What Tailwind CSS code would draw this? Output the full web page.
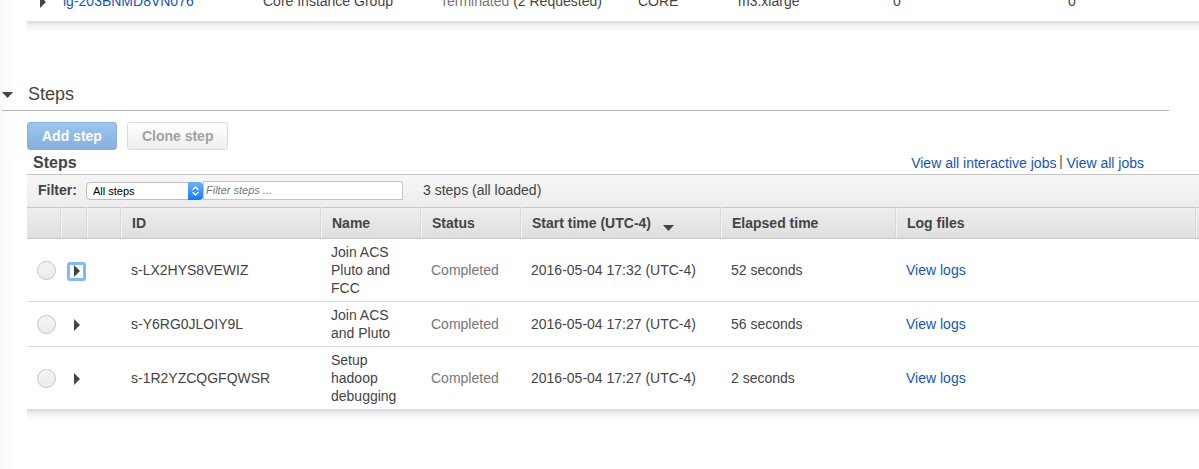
<!DOCTYPE html>
<html lang="en">
<head>
<meta charset="utf-8">
<title>Cluster steps</title>
<script src="https://cdn.jsdelivr.net/npm/@tailwindcss/browser@4"></script>
</head>
<body class="min-h-screen bg-linear-to-r from-[#fafafa] to-white to-[14px] font-['Liberation_Sans',Arial,sans-serif] text-sm leading-[18px] text-[#444]">

<section class="pl-[27px]" aria-label="Instance groups">
  <div class="flex h-[21px] flex-col justify-end overflow-hidden">
    <table class="w-full table-fixed border-collapse">
      <colgroup><col class="w-[36px]"><col class="w-[200px]"><col class="w-[177px]"><col class="w-[198px]"><col class="w-[100px]"><col class="w-[155px]"><col class="w-[175px]"><col></colgroup>
      <tbody>
        <tr class="align-top whitespace-nowrap">
          <td class="p-0 pb-[13px] pl-[13px]"><button type="button" aria-label="Expand instance group" class="block pt-1"><svg class="block h-[12px] w-[6px] fill-[#444]" viewBox="0 0 6 12"><path d="M0 0L6 6L0 12Z"/></svg></button></td>
          <td class="p-0"><a href="#" class="text-[#1456b4]">ig-203BNMD8VN076</a></td>
          <td class="p-0">Core Instance Group</td>
          <td class="p-0"><span class="text-[#777]">Terminated</span> (2 Requested)</td>
          <td class="p-0">CORE</td>
          <td class="p-0">m3.xlarge</td>
          <td class="p-0">0</td>
          <td class="p-0">0</td>
        </tr>
      </tbody>
    </table>
  </div>
  <div class="h-[12px] bg-linear-to-b from-[#dadada] via-[#f3f3f3] via-40% to-white"></div>
</section>

<section aria-label="Steps">
  <header class="mr-[30px] ml-[2px] flex h-[78px] items-end border-b border-[#b8b8b8] pb-[4px]">
    <button type="button" aria-label="Collapse steps" class="flex h-6 items-center">
      <svg class="mt-[2px] mr-[15px] block h-[6px] w-[11px] fill-[#444]" viewBox="0 0 11 6"><path d="M0 0H11L5.500 6Z"/></svg>
    </button>
    <h2 class="text-lg leading-6">Steps</h2>
  </header>

  <div class="pl-[27px]">
    <div class="flex gap-[10px] pt-[11px]">
      <button type="button" class="h-[28px] rounded-[3px] border border-[#8ab2da] bg-linear-to-b from-[#9cc6ef] to-[#86b0da] px-[14px] font-bold text-white">Add step</button>
      <button type="button" disabled class="h-[28px] rounded-[3px] border border-[#dcdcdc] bg-linear-to-b from-white to-[#eee] px-[14px] font-bold text-[#a2a2a2]">Clone step</button>
    </div>

    <div class="flex h-[24px] items-center justify-between pr-[55px] pl-[6px]">
      <h3 class="pt-[2px] text-base leading-6 font-bold">Steps</h3>
      <nav class="flex items-center gap-1 pt-[2px]" aria-label="Jobs">
        <a href="#" class="text-[#1456b4]">View all interactive jobs</a>
        <span class="mb-[2px] h-[14px] w-[2px] bg-[#cf8a4c]"></span>
        <a href="#" class="text-[#1456b4]">View all jobs</a>
      </nav>
    </div>

    <div class="flex h-[33px] items-center border-t border-[#c5c5c5] bg-linear-to-b from-[#f6f6f6] to-[#ededed] pb-[2px] pl-[11px]">
      <label for="state" class="w-[48px] font-bold">Filter:</label>
      <div class="relative mt-[2px] h-[18px] w-[117px]">
        <select id="state" class="block h-[18px] w-full appearance-none rounded-[4px] border border-[#bdbdbd] bg-white pl-[6px] text-[11px] leading-4 text-black"><option>All steps</option></select>
        <span class="pointer-events-none absolute top-0 right-0 flex h-[18px] w-[15px] items-center justify-center rounded-r-[4px] bg-linear-to-b from-[#6ab3f9] to-[#0a78fb]">
          <svg class="h-[10px] w-[7px] fill-none stroke-white" viewBox="0 0 7 10" stroke-width="1.300" stroke-linecap="round" stroke-linejoin="round"><path d="M1 3.500L3.500 1L6 3.500M1 6.500L3.500 9L6 6.500"/></svg>
        </span>
      </div>
      <input type="text" aria-label="Filter steps" placeholder="Filter steps ..." class="h-[19px] w-[200px] border border-[#c5c5c5] bg-white px-[2px] text-[11px] italic placeholder:text-[#777]">
      <span class="pl-5">3 steps (all loaded)</span>
    </div>

    <table class="w-full table-fixed border-separate border-spacing-0">
      <colgroup><col class="w-[34px]"><col class="w-[26px]"><col class="w-[34px]"><col class="w-[200px]"><col class="w-[100px]"><col class="w-[100px]"><col class="w-[200px]"><col class="w-[175px]"><col><col class="w-[3px]"></colgroup>
      <thead>
        <tr class="h-[32px] bg-linear-to-b from-[#eee] to-[#dedede] text-left *:border-y *:border-t-[#c5c5c5] *:border-b-[#c5c5c5]">
          <td class="border-r border-r-[#d8d8d8] p-0"></td>
          <td class="border-r border-l border-r-[#d8d8d8] border-l-[#f2f2f2] p-0"></td>
          <td class="border-r border-l border-r-[#d8d8d8] border-l-[#f2f2f2] p-0"></td>
          <th scope="col" class="border-r border-l border-r-[#d8d8d8] border-l-[#f2f2f2] p-0 pl-[10px]">ID</th>
          <th scope="col" class="border-r border-l border-r-[#d8d8d8] border-l-[#f2f2f2] p-0 pl-[10px]">Name</th>
          <th scope="col" class="border-r border-l border-r-[#d8d8d8] border-l-[#f2f2f2] p-0 pl-[10px]">Status</th>
          <th scope="col" aria-sort="descending" class="border-r border-l border-r-[#d8d8d8] border-l-[#f2f2f2] p-0 pl-[10px]"><span class="flex items-center">Start time (UTC-4)<svg class="mt-[9px] ml-3 h-[6px] w-[11px] fill-[#444]" viewBox="0 0 11 6"><path d="M0 0H11L5.500 6Z"/></svg></span></th>
          <th scope="col" class="border-r border-l border-r-[#d8d8d8] border-l-[#f2f2f2] p-0 pl-[10px]">Elapsed time</th>
          <th scope="col" class="border-r border-l border-r-[#d8d8d8] border-l-[#f2f2f2] p-0 pl-[10px]">Log files</th>
          <td class="border-l border-l-[#f2f2f2] p-0"></td>
        </tr>
      </thead>
      <tbody class="bg-white">
        <tr class="*:border-b *:border-[#ddd]">
          <td class="p-0 pl-[10px]"><input type="radio" name="step" aria-label="Select s-LX2HYS8VEWIZ" class="block h-[19px] w-[19px] appearance-none rounded-full border border-[#c6c6c6] bg-linear-to-b from-[#f4f4f4] to-[#ebebeb]"></td>
          <td class="p-0 pl-[6px]"><button type="button" aria-label="Expand s-LX2HYS8VEWIZ" class="mt-[2px] flex h-[19px] w-[19px] items-center justify-center rounded-[3px] border-3 border-[#7fb9fb]"><svg class="h-[12px] w-[6px] fill-[#444]" viewBox="0 0 6 12"><path d="M0 0L6 6L0 12Z"/></svg></button></td>
          <td class="p-0"></td>
          <td class="p-0 pl-[10px]">s-LX2HYS8VEWIZ</td>
          <td class="py-1 pr-4 pl-[10px]">Join ACS Pluto and FCC</td>
          <td class="p-0 pl-[10px] text-[#777]">Completed</td>
          <td class="p-0 pl-[10px]">2016-05-04 17:32 (UTC-4)</td>
          <td class="p-0 pl-[10px]">52 seconds</td>
          <td class="p-0 pl-[10px]"><a href="#" class="text-[#1456b4]">View logs</a></td>
          <td class="p-0"></td>
        </tr>
        <tr class="*:border-b *:border-[#ddd]">
          <td class="p-0 pl-[10px]"><input type="radio" name="step" aria-label="Select s-Y6RG0JLOIY9L" class="block h-[19px] w-[19px] appearance-none rounded-full border border-[#c6c6c6] bg-linear-to-b from-[#f4f4f4] to-[#ebebeb]"></td>
          <td class="p-0 pl-[6px]"><button type="button" aria-label="Expand s-Y6RG0JLOIY9L" class="mt-[2px] flex h-[19px] w-[19px] items-center justify-center"><svg class="h-[12px] w-[6px] fill-[#444]" viewBox="0 0 6 12"><path d="M0 0L6 6L0 12Z"/></svg></button></td>
          <td class="p-0"></td>
          <td class="p-0 pl-[10px]">s-Y6RG0JLOIY9L</td>
          <td class="py-1 pr-4 pl-[10px]">Join ACS and Pluto</td>
          <td class="p-0 pl-[10px] text-[#777]">Completed</td>
          <td class="p-0 pl-[10px]">2016-05-04 17:27 (UTC-4)</td>
          <td class="p-0 pl-[10px]">56 seconds</td>
          <td class="p-0 pl-[10px]"><a href="#" class="text-[#1456b4]">View logs</a></td>
          <td class="p-0"></td>
        </tr>
        <tr>
          <td class="p-0 pl-[10px]"><input type="radio" name="step" aria-label="Select s-1R2YZCQGFQWSR" class="block h-[19px] w-[19px] appearance-none rounded-full border border-[#c6c6c6] bg-linear-to-b from-[#f4f4f4] to-[#ebebeb]"></td>
          <td class="p-0 pl-[6px]"><button type="button" aria-label="Expand s-1R2YZCQGFQWSR" class="mt-[2px] flex h-[19px] w-[19px] items-center justify-center"><svg class="h-[12px] w-[6px] fill-[#444]" viewBox="0 0 6 12"><path d="M0 0L6 6L0 12Z"/></svg></button></td>
          <td class="p-0"></td>
          <td class="p-0 pl-[10px]">s-1R2YZCQGFQWSR</td>
          <td class="py-1 pr-4 pl-[10px]">Setup hadoop debugging</td>
          <td class="p-0 pl-[10px] text-[#777]">Completed</td>
          <td class="p-0 pl-[10px]">2016-05-04 17:27 (UTC-4)</td>
          <td class="p-0 pl-[10px]">2 seconds</td>
          <td class="p-0 pl-[10px]"><a href="#" class="text-[#1456b4]">View logs</a></td>
          <td class="p-0"></td>
        </tr>
      </tbody>
    </table>
    <div class="h-[12px] bg-linear-to-b from-[#dadada] via-[#f3f3f3] via-40% to-white"></div>
  </div>
</section>
</body>
</html>
